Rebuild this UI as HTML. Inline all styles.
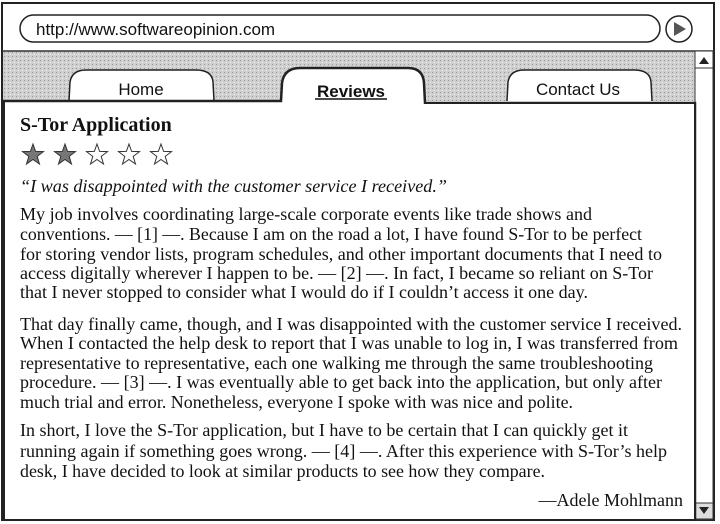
<!DOCTYPE html>
<html><head><meta charset="utf-8"><style>
html,body{margin:0;padding:0;background:#fff;width:720px;height:524px;overflow:hidden}
svg{display:block}
.t{font-family:"Liberation Serif",serif;font-size:18px;fill:#111}
</style></head><body>
<svg width="720" height="524" viewBox="0 0 720 524" xmlns="http://www.w3.org/2000/svg">
<defs>
<pattern id="g" width="4" height="4" patternUnits="userSpaceOnUse">
<rect width="4" height="4" fill="#cfcfcf"/><rect x="0" y="0" width="1" height="1" fill="#999"/><rect x="2" y="2" width="1" height="1" fill="#eee"/>
</pattern>
<path id="st" d="M0,-11 L2.6,-3.6 L10.5,-3.4 L4.2,1.4 L6.5,9 L0,4.5 L-6.5,9 L-4.2,1.4 L-10.5,-3.4 L-2.6,-3.6 Z"/>
</defs>
<rect x="2" y="3" width="712" height="517" fill="#fff" stroke="#222" stroke-width="2"/>
<rect x="20" y="15" width="640" height="27" rx="13.5" fill="#fff" stroke="#222" stroke-width="1.5"/>
<text x="36" y="35" font-family="Liberation Sans,sans-serif" font-size="17" fill="#111">http://www.softwareopinion.com</text>
<circle cx="679" cy="29" r="13" fill="#fff" stroke="#222" stroke-width="1.5"/>
<path d="M674,22 L674,36 L686,29 Z" fill="#555"/>
<rect x="3" y="51" width="692" height="50" fill="url(#g)"/>
<line x1="2" y1="51" x2="714" y2="51" stroke="#333" stroke-width="1.5"/>
<rect x="695" y="51" width="18" height="469" fill="#fff" stroke="#333" stroke-width="1"/>
<line x1="695" y1="68" x2="713" y2="68" stroke="#333"/>
<path d="M699,64 L704,57 L709,64 Z" fill="#222"/>
<rect x="695" y="503" width="18" height="16" fill="#ddd" stroke="#333"/>
<path d="M699,507 L709,507 L704,514 Z" fill="#222"/>
<path d="M69,101 L70,82 Q72,70 86,70 L196,70 Q212,70 213,82 L214,101" fill="#fff" stroke="#222" stroke-width="1.5"/>
<text x="141" y="95" text-anchor="middle" font-family="Liberation Sans,sans-serif" font-size="17" fill="#111">Home</text>
<path d="M507,101 L508,82 Q510,70 524,70 L634,70 Q650,70 651,82 L652,101" fill="#fff" stroke="#222" stroke-width="1.5"/>
<text x="578" y="95" text-anchor="middle" font-family="Liberation Sans,sans-serif" font-size="17" fill="#111">Contact Us</text>
<path d="M3,101 L281,101 L282,83 Q284,68 300,68 L408,68 Q423,68 424,83 L425,103 L695,103 L695,520" fill="#fff" stroke="#222" stroke-width="2.5"/>
<rect x="4" y="104" width="690" height="415" fill="#fff"/>
<line x1="4" y1="102" x2="4" y2="520" stroke="#222" stroke-width="2"/>
<text x="351" y="97" text-anchor="middle" font-family="Liberation Sans,sans-serif" font-size="17" font-weight="bold" fill="#111">Reviews</text>
<line x1="315" y1="99" x2="387" y2="99" stroke="#111" stroke-width="1.5"/>
<text x="20" y="131" font-family="Liberation Serif,serif" font-size="20" font-weight="bold" fill="#111">S-Tor Application</text>
<use href="#st" x="33" y="155" fill="#777" stroke="#333"/>
<use href="#st" x="65" y="155" fill="#777" stroke="#333"/>
<use href="#st" x="97" y="155" fill="none" stroke="#333"/>
<use href="#st" x="129" y="155" fill="none" stroke="#333"/>
<use href="#st" x="161" y="155" fill="none" stroke="#333"/>
<text class="t" x="20" y="192" font-style="italic" textLength="427" lengthAdjust="spacingAndGlyphs">“I was disappointed with the customer service I received.”</text>
<text class="t" x="20" y="220" textLength="572" lengthAdjust="spacingAndGlyphs">My job involves coordinating large-scale corporate events like trade shows and</text>
<text class="t" x="20" y="240" textLength="622" lengthAdjust="spacingAndGlyphs">conventions. — [1] —. Because I am on the road a lot, I have found S-Tor to be perfect</text>
<text class="t" x="20" y="260" textLength="642" lengthAdjust="spacingAndGlyphs">for storing vendor lists, program schedules, and other important documents that I need to</text>
<text class="t" x="20" y="279" textLength="633" lengthAdjust="spacingAndGlyphs">access digitally wherever I happen to be. — [2] —. In fact, I became so reliant on S-Tor</text>
<text class="t" x="20" y="298" textLength="568" lengthAdjust="spacingAndGlyphs">that I never stopped to consider what I would do if I couldn’t access it one day.</text>
<text class="t" x="20" y="330" textLength="662" lengthAdjust="spacingAndGlyphs">That day finally came, though, and I was disappointed with the customer service I received.</text>
<text class="t" x="20" y="349" textLength="658" lengthAdjust="spacingAndGlyphs">When I contacted the help desk to report that  I was unable to log in, I was transferred from</text>
<text class="t" x="20" y="369" textLength="633" lengthAdjust="spacingAndGlyphs">representative to representative, each one walking me through the same troubleshooting</text>
<text class="t" x="20" y="388" textLength="642" lengthAdjust="spacingAndGlyphs">procedure. — [3] —. I was eventually able to get back into the application, but only after</text>
<text class="t" x="20" y="408" textLength="553" lengthAdjust="spacingAndGlyphs">much trial and error. Nonetheless, everyone I spoke with was nice and polite.</text>
<text class="t" x="20" y="436" textLength="608" lengthAdjust="spacingAndGlyphs">In short, I love the S-Tor application, but I have to be certain that I can quickly get it</text>
<text class="t" x="20" y="457" textLength="647" lengthAdjust="spacingAndGlyphs">running again if something goes wrong. — [4] —. After this experience with S-Tor’s help</text>
<text class="t" x="20" y="477" textLength="525" lengthAdjust="spacingAndGlyphs">desk, I have decided to look at similar products to see how they compare.</text>
<text class="t" x="683" y="506" text-anchor="end">—Adele Mohlmann</text>
</svg>
</body></html>
